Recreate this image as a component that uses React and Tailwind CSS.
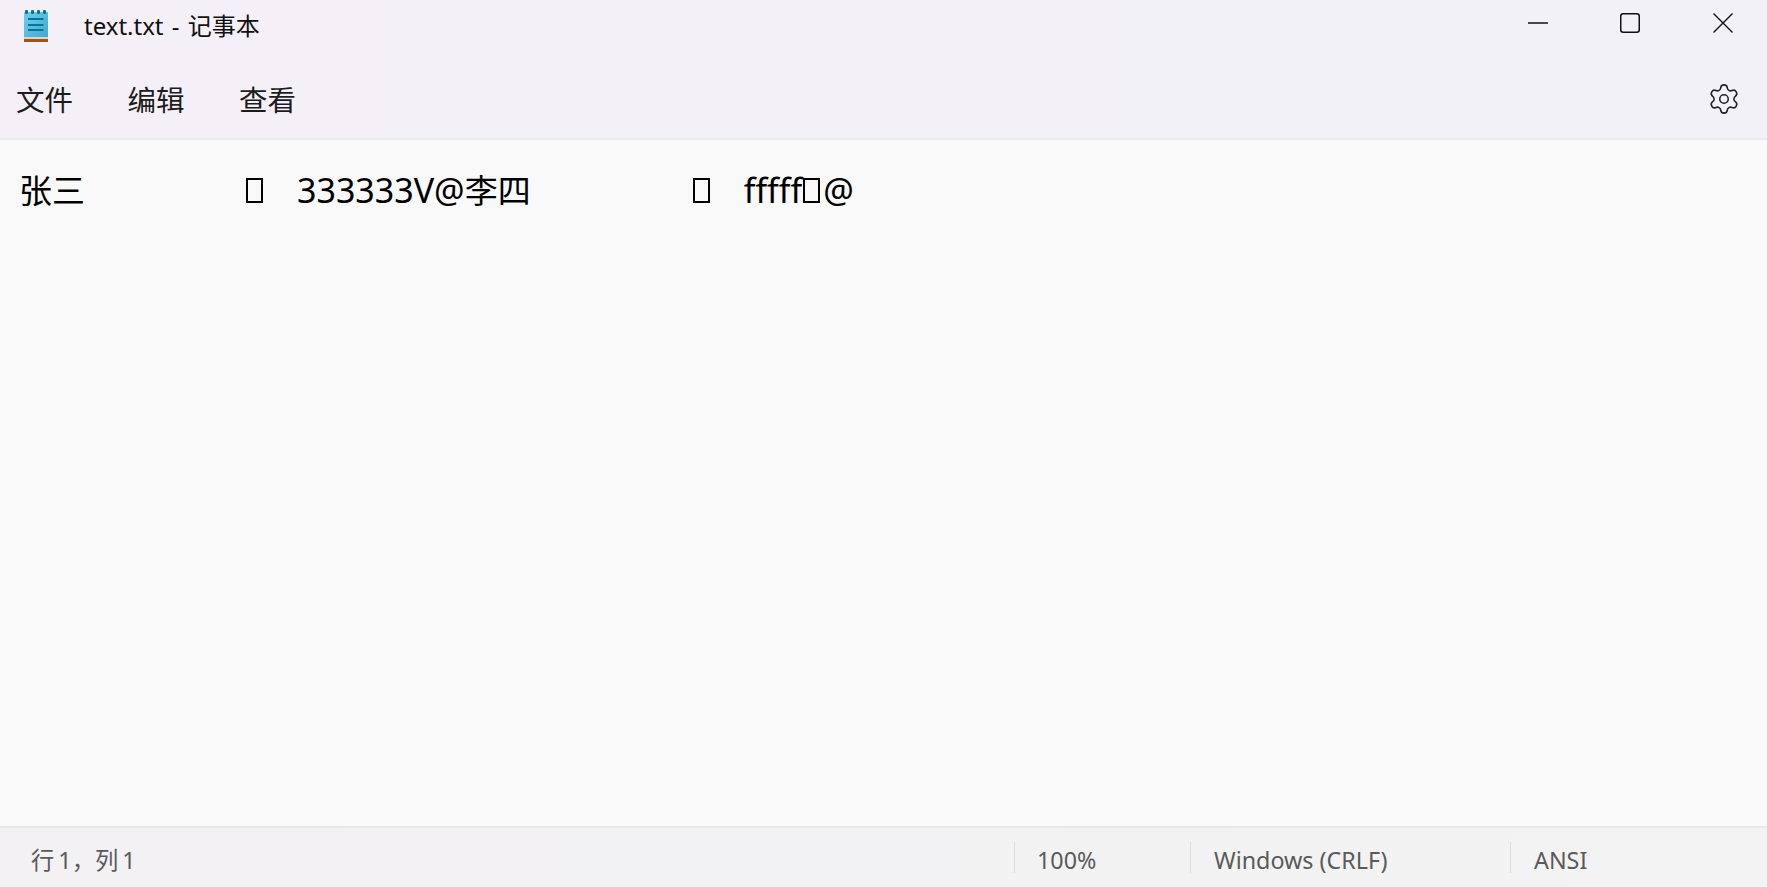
import React from 'react';
import { Settings } from 'lucide-react';

const NotepadIcon = () => (
    <svg width="28" height="34" viewBox="0 0 28 34" className='shrink-0'>
        <defs>
            <linearGradient id="pad" x1="0" y1="0" x2="1" y2="1">
                <stop offset="0" stopColor="#6fd0ef" />
                <stop offset="1" stopColor="#3fa9cf" />
            </linearGradient>
        </defs>
        <rect x="1" y="3" width="24" height="25" fill="url(#pad)" />
        <rect x="1" y="28" width="24" height="2" fill="#d9d6d2" />
        <rect x="1" y="30" width="24" height="3" fill="#a9520f" />
        <rect x="2" y="1" width="3" height="4" rx="1" fill="#0b7397" />
        <rect x="8" y="1" width="3" height="4" rx="1" fill="#0b7397" />
        <rect x="14" y="1" width="3" height="4" rx="1" fill="#0b7397" />
        <rect x="20" y="1" width="3" height="4" rx="1" fill="#0b7397" />
        <rect x="5" y="9" width="15.500" height="2" fill="#0b7397" />
        <rect x="5" y="15" width="15.500" height="2" fill="#0b7397" />
        <rect x="5" y="20" width="15.500" height="2" fill="#0b7397" />
    </svg>
);

const WindowControls = () => (
    <div className='flex -mr-0.5 text-[#111]'>
        <button className='w-[90px] h-[46px] flex items-center justify-center'>
            <svg width="20" height="20" viewBox="0 0 20 20"><path d="M0 10h20" stroke="currentColor" strokeWidth="1.500" /></svg>
        </button>
        <button className='w-[94px] h-[46px] flex items-center justify-center'>
            <svg width="20" height="20" viewBox="0 0 20 20"><rect x="0.750" y="0.750" width="18.500" height="18.500" rx="2.500" fill="none" stroke="currentColor" strokeWidth="1.500" /></svg>
        </button>
        <button className='w-[92px] h-[46px] flex items-center justify-center'>
            <svg width="20" height="20" viewBox="0 0 20 20"><path d="M0.500 0.500l19 19M19.500 0.500l-19 19" stroke="currentColor" strokeWidth="1.400" /></svg>
        </button>
    </div>
);

const Tofu = () => (
    <span className='inline-block w-[17px] h-[25px] border-2 border-black align-baseline'></span>
);

const App = () => {
    return (
        <div className="h-[887px] w-full overflow-hidden flex flex-col bg-[#f9f9f9] font-['Noto_Sans','Noto_Sans_CJK_SC',sans-serif]">
            <div className='h-[138px] shrink-0 bg-gradient-to-r from-[#f5f0f8] to-[#f2f1f8]'>
                <div className='h-[60px] flex items-start justify-between'>
                    <div className='flex items-center h-[52px] pl-[23px]'>
                        <NotepadIcon />
                        <span className='ml-[33px] text-[24px] leading-none text-[#111] [word-spacing:2px]'>text.txt - 记事本</span>
                    </div>
                    <WindowControls />
                </div>
                <div className='h-[78px] flex items-center justify-between pl-[16px] pr-[26px]'>
                    <div className='flex gap-[54.500px] pt-[2px] text-[28.500px] leading-none text-[#1c1c1c]'>
                        <span>文件</span>
                        <span>编辑</span>
                        <span>查看</span>
                    </div>
                    <Settings size={34} strokeWidth={1.100} className='text-[#222]' />
                </div>
            </div>
            <div className='h-[2px] shrink-0 bg-[#ebebed]'></div>
            <div className='flex-1 pt-[27px] pl-[19px] text-[34px] leading-[46px] text-black whitespace-nowrap'>
                <span className='text-[33px]'>张三</span>
                <span className='ml-[161px]'><Tofu /></span>
                <span className='ml-[34px]'>333333V@<span className='text-[33px]'>李四</span></span>
                <span className='ml-[162px]'><Tofu /></span>
                <span className='ml-[34px]'>fffff<span className='ml-[1px] mr-[3px]'><Tofu /></span>@</span>
            </div>
            <div className='h-[2px] shrink-0 bg-[#e8e8ea]'></div>
            <div className='h-[59px] shrink-0 flex items-center bg-gradient-to-r from-[#f3f1f4] to-[#f3f3f3] text-[23.300px] leading-none text-[#5a5a5a]'>
                <div className='flex-1 pl-[31px] pt-[6px] [word-spacing:-2px]'>行 1，列 1</div>
                <div className='w-[176px] h-[31px] flex items-center pl-[22px] pt-[6px] border-l border-[#dcdcdc]'>100%</div>
                <div className='w-[320px] h-[31px] flex items-center pl-[23px] pt-[6px] border-l border-[#dcdcdc]'>Windows (CRLF)</div>
                <div className='w-[257px] h-[31px] flex items-center pl-[23px] pt-[6px] border-l border-[#dcdcdc]'>ANSI</div>
            </div>
        </div>
    );
};

export default App;
